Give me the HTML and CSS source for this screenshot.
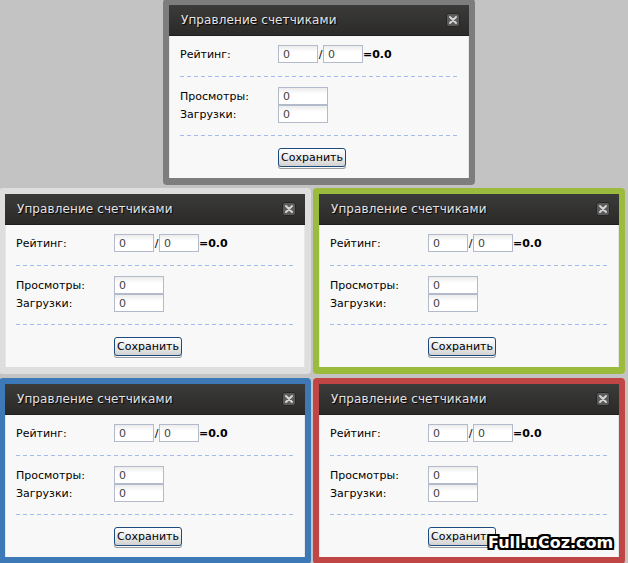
FILE: index.html
```html
<!DOCTYPE html>
<html lang="ru">
<head>
    <meta charset="UTF-8">
    <meta name="viewport" content="width=device-width, initial-scale=1.0">
    <title>Управление счетчиками</title>
    <link rel="stylesheet" href="styles.css">
</head>
<body>

    <div class="desk">

        <!-- Top: default gray frame -->
        <div class="row row-top">
            <div class="frame frame-gray">
                <div class="dialog">
                    <div class="dialog-head">
                        <span class="dialog-title">Управление счетчиками</span>
                        <span class="close"><svg width="14" height="14" viewBox="0 0 14 14"><path d="M4 4L10 10M10 4L4 10" stroke="#d4d4d4" stroke-width="2" stroke-linecap="round"/></svg></span>
                    </div>
                    <div class="dialog-body">
                        <div class="field">
                            <span class="label">Рейтинг:</span>
                            <input class="num" value="0"><span class="slash">/</span><input class="num" value="0"><b class="total">=0.0</b>
                        </div>
                        <div class="sep"></div>
                        <div class="field field-first">
                            <span class="label">Просмотры:</span>
                            <input class="num num-wide" value="0">
                        </div>
                        <div class="field">
                            <span class="label">Загрузки:</span>
                            <input class="num num-wide" value="0">
                        </div>
                        <div class="sep sep-low"></div>
                        <div class="actions"><button class="save">Сохранить</button></div>
                    </div>
                </div>
            </div>
        </div>

        <!-- Middle row -->
        <div class="row row-mid">
            <div class="frame frame-light">
                <div class="dialog">
                    <div class="dialog-head">
                        <span class="dialog-title">Управление счетчиками</span>
                        <span class="close"><svg width="14" height="14" viewBox="0 0 14 14"><path d="M4 4L10 10M10 4L4 10" stroke="#d4d4d4" stroke-width="2" stroke-linecap="round"/></svg></span>
                    </div>
                    <div class="dialog-body">
                        <div class="field">
                            <span class="label">Рейтинг:</span>
                            <input class="num" value="0"><span class="slash">/</span><input class="num" value="0"><b class="total">=0.0</b>
                        </div>
                        <div class="sep"></div>
                        <div class="field field-first">
                            <span class="label">Просмотры:</span>
                            <input class="num num-wide" value="0">
                        </div>
                        <div class="field">
                            <span class="label">Загрузки:</span>
                            <input class="num num-wide" value="0">
                        </div>
                        <div class="sep sep-low"></div>
                        <div class="actions"><button class="save">Сохранить</button></div>
                    </div>
                </div>
            </div>

            <div class="frame frame-green">
                <div class="dialog">
                    <div class="dialog-head">
                        <span class="dialog-title">Управление счетчиками</span>
                        <span class="close"><svg width="14" height="14" viewBox="0 0 14 14"><path d="M4 4L10 10M10 4L4 10" stroke="#d4d4d4" stroke-width="2" stroke-linecap="round"/></svg></span>
                    </div>
                    <div class="dialog-body">
                        <div class="field">
                            <span class="label">Рейтинг:</span>
                            <input class="num" value="0"><span class="slash">/</span><input class="num" value="0"><b class="total">=0.0</b>
                        </div>
                        <div class="sep"></div>
                        <div class="field field-first">
                            <span class="label">Просмотры:</span>
                            <input class="num num-wide" value="0">
                        </div>
                        <div class="field">
                            <span class="label">Загрузки:</span>
                            <input class="num num-wide" value="0">
                        </div>
                        <div class="sep sep-low"></div>
                        <div class="actions"><button class="save">Сохранить</button></div>
                    </div>
                </div>
            </div>
        </div>

        <!-- Bottom row -->
        <div class="row row-bottom">
            <div class="frame frame-blue">
                <div class="dialog">
                    <div class="dialog-head">
                        <span class="dialog-title">Управление счетчиками</span>
                        <span class="close"><svg width="14" height="14" viewBox="0 0 14 14"><path d="M4 4L10 10M10 4L4 10" stroke="#d4d4d4" stroke-width="2" stroke-linecap="round"/></svg></span>
                    </div>
                    <div class="dialog-body">
                        <div class="field">
                            <span class="label">Рейтинг:</span>
                            <input class="num" value="0"><span class="slash">/</span><input class="num" value="0"><b class="total">=0.0</b>
                        </div>
                        <div class="sep"></div>
                        <div class="field field-first">
                            <span class="label">Просмотры:</span>
                            <input class="num num-wide" value="0">
                        </div>
                        <div class="field">
                            <span class="label">Загрузки:</span>
                            <input class="num num-wide" value="0">
                        </div>
                        <div class="sep sep-low"></div>
                        <div class="actions"><button class="save">Сохранить</button></div>
                    </div>
                </div>
            </div>

            <div class="frame frame-red">
                <div class="dialog">
                    <div class="dialog-head">
                        <span class="dialog-title">Управление счетчиками</span>
                        <span class="close"><svg width="14" height="14" viewBox="0 0 14 14"><path d="M4 4L10 10M10 4L4 10" stroke="#d4d4d4" stroke-width="2" stroke-linecap="round"/></svg></span>
                    </div>
                    <div class="dialog-body">
                        <div class="field">
                            <span class="label">Рейтинг:</span>
                            <input class="num" value="0"><span class="slash">/</span><input class="num" value="0"><b class="total">=0.0</b>
                        </div>
                        <div class="sep"></div>
                        <div class="field field-first">
                            <span class="label">Просмотры:</span>
                            <input class="num num-wide" value="0">
                        </div>
                        <div class="field">
                            <span class="label">Загрузки:</span>
                            <input class="num num-wide" value="0">
                        </div>
                        <div class="sep sep-low"></div>
                        <div class="actions"><button class="save">Сохранить</button></div>
                    </div>
                </div>
            </div>
        </div>

        <div class="watermark">Full.uCoz.com</div>
    </div>

</body>
</html>
```

FILE: styles.css
```css
body {
    margin: 0;
    background: #c3c3c3;
    font-family: "DejaVu Sans", Verdana, sans-serif;
    font-size: 11px;
    color: #000;
    overflow: hidden;
}

.desk {
    position: relative;
    width: 628px;
    height: 563px;
    overflow: hidden;
}

.row {
    display: flex;
    gap: 2px;
}

.row-top {
    margin-top: -1px;
    padding-left: 163px;
}

.row-mid {
    margin-top: 3px;
    margin-left: -1px;
}

.row-bottom {
    margin-top: 4px;
    margin-left: -1px;
}

/* Frames */
.frame {
    padding: 6px 6px 7px 6px;
    border-radius: 4px;
}

.frame-gray {
    background: #7d7d7d;
}

.frame-light {
    background: #dedede;
}

.frame-green {
    background: #9bbb3d;
}

.frame-blue {
    background: #3c79b6;
}

.frame-red {
    background: #c04545;
}

/* Dialog */
.dialog {
    width: 300px;
}

.dialog-head {
    height: 31px;
    display: flex;
    align-items: center;
    justify-content: space-between;
    padding: 0 9px 0 12px;
    background: linear-gradient(#3b3b3a, #2b2a29);
    border-bottom: 1px solid #1e1e1e;
    box-sizing: border-box;
}

.dialog-title {
    color: #e4e4e4;
    font-size: 12px;
    letter-spacing: 0.1px;
    text-shadow: 1px 1px 1px #000;
}

.close {
    display: flex;
    width: 14px;
    height: 14px;
    background: #5b5b5b;
    border: 1px solid #262626;
    border-radius: 3px;
    box-sizing: border-box;
    align-items: center;
    justify-content: center;
}

.close svg {
    display: block;
    flex: none;
}

.dialog-body {
    height: 142px;
    box-sizing: border-box;
    padding: 9px 10px 0 10px;
    background: #f8f8f8;
    border-left: 1px solid #e6e6e6;
    border-right: 1px solid #e6e6e6;
}

.field {
    display: flex;
    align-items: center;
    height: 18px;
}

.field-first {
    margin-top: 10px;
}

.label {
    width: 98px;
    flex: none;
}

.num {
    width: 40px;
    height: 18px;
    box-sizing: border-box;
    margin: 0;
    padding: 0 4px;
    border: 1px solid #b3bacb;
    background: linear-gradient(#ececec, #ffffff 6px);
    font-family: "DejaVu Sans", Verdana, sans-serif;
    font-size: 11px;
    color: #444;
}

.num-wide {
    width: 50px;
}

.slash {
    width: 5px;
    text-align: center;
}

.total {
    font-weight: bold;
}

.sep {
    height: 1px;
    margin-top: 13px;
    background: repeating-linear-gradient(to right, #a3bcf0 0 4px, transparent 4px 7px);
}

.sep-low {
    margin-top: 12px;
}

.actions {
    margin-top: 12px;
    padding-left: 98px;
}

.save {
    width: 68px;
    height: 19px;
    padding: 0;
    border: 1px solid #1d4c7c;
    border-radius: 3px;
    background: linear-gradient(#ffffff, #ececec 50%, #d2d2d2);
    font-family: "DejaVu Sans", Verdana, sans-serif;
    font-size: 11px;
    color: #000;
    box-shadow: 0 2px 0 -1px #f8f8f8, 0 2px 0 0 #9a9a9a;
}

/* watermark over the last window */
.watermark {
    position: absolute;
    left: 488px;
    top: 533px;
    font-family: "DejaVu Sans", Verdana, sans-serif;
    font-size: 16px;
    font-weight: bold;
    color: #fff;
    letter-spacing: 0;
    text-shadow:
        -2px 0 0 #000, 2px 0 0 #000, 0 -2px 0 #000, 0 2px 0 #000,
        -1px -1px 0 #000, 1px 1px 0 #000, -1px 1px 0 #000, 1px -1px 0 #000,
        -2px -2px 0 #000, 2px 2px 0 #000, -2px 2px 0 #000, 2px -2px 0 #000;
}
```
